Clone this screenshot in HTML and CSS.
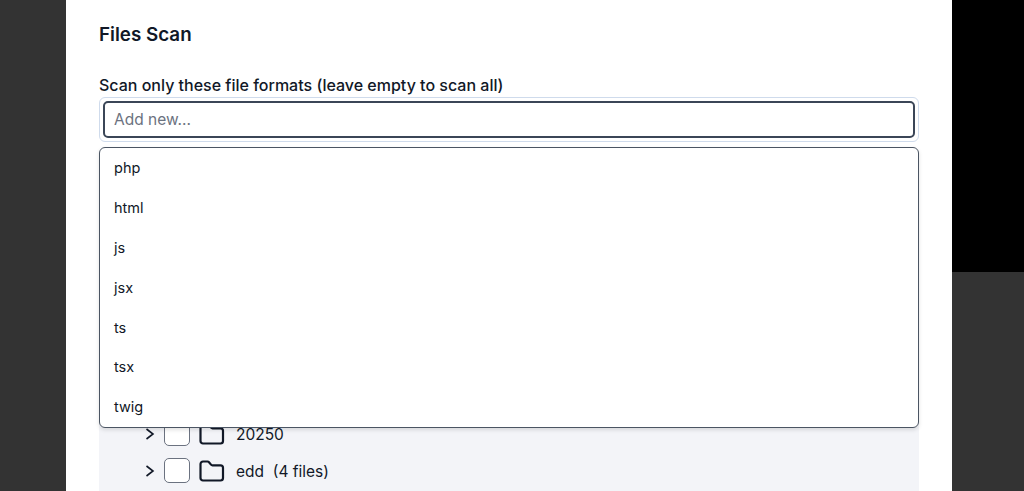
FILE: index.html
```html
<!DOCTYPE html>
<html>
<head>
    <title>Files Scan</title>
    <link rel="stylesheet" href="styles.css">
</head>
<body>
    <div class="page">
        <div class="gutter"></div>

        <main class="panel">
            <h2 class="title">Files Scan</h2>

            <label class="field-label" for="formats">Scan only these file formats (leave empty to scan all)</label>
            <div class="field">
                <div class="token-box">
                    <input type="text" id="formats" class="token-input" placeholder="Add new...">
                </div>
                <ul class="suggestions">
                    <li>php</li>
                    <li>html</li>
                    <li>js</li>
                    <li>jsx</li>
                    <li>ts</li>
                    <li>tsx</li>
                    <li>twig</li>
                </ul>
            </div>

            <div class="tree">
                <div class="tree-row">
                    <svg class="chevron" viewBox="0 0 10 12"><path d="M1.500 1 L8 6 L1.500 11"/></svg>
                    <span class="checkbox"></span>
                    <svg class="folder" viewBox="0 0 26 22"><path d="M1.500 4 a2.500 2.500 0 0 1 2.500 -2.500 h4.500 a2 2 0 0 1 1.500 .7 l2 2.400 a2 2 0 0 0 1.500 .7 h8 a2.500 2.500 0 0 1 2.500 2.500 v10.200 a2.500 2.500 0 0 1 -2.500 2.500 h-17.500 a2.500 2.500 0 0 1 -2.500 -2.500 z"/></svg>
                    <span>20250</span>
                </div>
                <div class="tree-row">
                    <svg class="chevron" viewBox="0 0 10 12"><path d="M1.500 1 L8 6 L1.500 11"/></svg>
                    <span class="checkbox"></span>
                    <svg class="folder" viewBox="0 0 26 22"><path d="M1.500 4 a2.500 2.500 0 0 1 2.500 -2.500 h4.500 a2 2 0 0 1 1.500 .7 l2 2.400 a2 2 0 0 0 1.500 .7 h8 a2.500 2.500 0 0 1 2.500 2.500 v10.200 a2.500 2.500 0 0 1 -2.500 2.500 h-17.500 a2.500 2.500 0 0 1 -2.500 -2.500 z"/></svg>
                    <span>edd&nbsp; (4 files)</span>
                </div>
            </div>
        </main>

        <div class="side">
            <div class="side-black"></div>
        </div>
    </div>
</body>
</html>
```

FILE: styles.css
```css
* {
    box-sizing: border-box;
}

html, body {
    margin: 0;
    height: 100%;
    overflow: hidden;
}

body {
    background-color: #333333;
    color: #111827;
    font-family: Inter, "Liberation Sans", sans-serif;
}

.page {
    display: flex;
    height: 491px;
}

.gutter {
    width: 66px;
}

.panel {
    width: 886px;
    height: 491px;
    background-color: #FFF;
    padding: 24px 33px 0;
    overflow: hidden;
}

.side {
    flex: 1;
}

.side-black {
    height: 272px;
    background-color: #000;
}

.title {
    margin: 0 0 30px;
    font-size: 18.800px;
    line-height: 21px;
    font-weight: 600;
}

.field-label {
    display: block;
    font-size: 16px;
    line-height: 20px;
    font-weight: 500;
    margin-bottom: 2px;
}

.field {
    position: relative;
}

.token-box {
    height: 45px;
    padding: 3px;
    background-color: #FFF;
    border: 1px solid #CFDBEC;
    border-radius: 6px;
}

.token-input {
    display: block;
    width: 100%;
    height: 37px;
    padding: 0 9px;
    border: 2px solid #3B4657;
    border-radius: 5px;
    outline: none;
    font-family: inherit;
    font-size: 15.500px;
    color: #111827;
}

.token-input::placeholder {
    color: #6B7280;
    opacity: 1;
}

.suggestions {
    position: absolute;
    top: 50px;
    left: 0;
    right: 0;
    height: 281px;
    margin: 0;
    padding: 0;
    list-style: none;
    background-color: #FFF;
    border: 1px solid #4B5563;
    border-radius: 6px;
    box-shadow: 0 2px 4px rgba(0, 0, 0, 0.12);
}

.suggestions li {
    height: 39.900px;
    padding: 0 14px;
    line-height: 39.900px;
    font-size: 14.500px;
}

.tree {
    margin-top: 266px;
    height: 120px;
    padding: 8px 0 0 46px;
    background-color: #F3F4F8;
    font-size: 15.500px;
}

.tree-row {
    display: flex;
    align-items: center;
    height: 37px;
}

.chevron {
    width: 10px;
    height: 12px;
    margin-right: 9px;
    margin-bottom: 2px;
    fill: none;
    stroke: #111827;
    stroke-width: 1.600;
}

.checkbox {
    width: 26px;
    height: 25px;
    margin-right: 9px;
    margin-bottom: 2px;
    background-color: #FFF;
    border: 1px solid #6B7280;
    border-radius: 5px;
}

.folder {
    width: 26px;
    height: 22px;
    margin-right: 11px;
    margin-bottom: 2px;
    fill: none;
    stroke: #111827;
    stroke-width: 2.200;
}
```
